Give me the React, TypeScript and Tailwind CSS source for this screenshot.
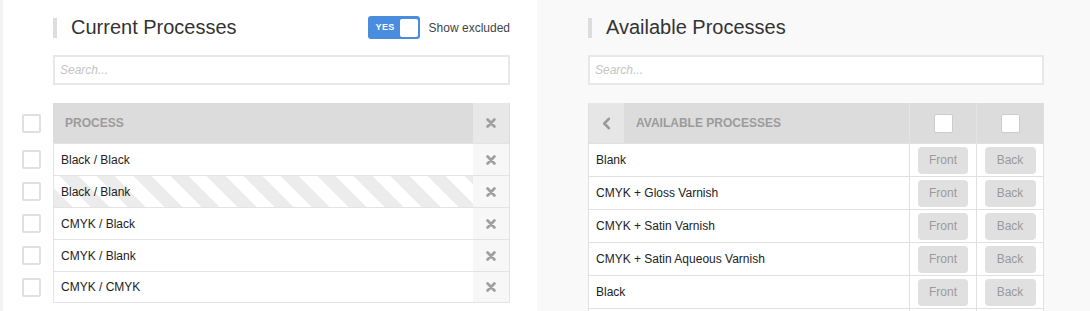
import React from "react";

const current = ["Black / Black", "Black / Blank", "CMYK / Black", "CMYK / Blank", "CMYK / CMYK"];
const available = [
  "Blank",
  "CMYK + Gloss Varnish",
  "CMYK + Satin Varnish",
  "CMYK + Satin Aqueous Varnish",
  "Black",
];

function Times() {
  return (
    <svg width="10" height="10" viewBox="0 0 10 10" className="text-[#a0a0a0]">
      <path d="M1.6 1.6 L8.4 8.4 M8.4 1.6 L1.6 8.4" stroke="currentColor" strokeWidth="2.8" strokeLinecap="round" />
    </svg>
  );
}

function Chevron() {
  return (
    <svg width="9" height="13" viewBox="0 0 9 13" className="text-[#9a9a9a]">
      <path d="M6.8 1.8 L2.3 6.5 L6.8 11.2" stroke="currentColor" strokeWidth="2.6" fill="none" strokeLinecap="round" strokeLinejoin="round" />
    </svg>
  );
}

function Box({ className = "" }: { className?: string }) {
  return <div className={"w-[19px] h-[19px] bg-white rounded-[2px] " + className} />;
}

function Title({ text }: { text: string }) {
  return (
    <div className="flex items-center">
      <div className="w-[4px] h-[20px] bg-[#dddddd]" />
      <div className="ml-[14px] text-[20px] leading-[23px] text-[#333333]">{text}</div>
    </div>
  );
}

function Search({ w }: { w: string }) {
  return (
    <div className={"mt-[16px] h-[30px] border-2 border-[#e8e8e8] bg-white flex items-center pl-[5px] " + w}>
      <span className="italic text-[12px] text-[#c4c4c4]">Search...</span>
    </div>
  );
}

export default function App() {
  return (
    <div className="flex w-[1090px] h-[311px] overflow-hidden font-['Liberation_Sans',Arial,sans-serif]">
      {/* Left panel */}
      <div className="w-[537px] shrink-0 bg-white border-l-[3px] border-[#f3f3f3] pl-[19px] pt-[16px]">
        <div className="ml-[31px] w-[457px]">
          <div className="flex items-center h-[23px]">
            <Title text="Current Processes" />
            <div className="ml-auto flex items-center">
              <div className="w-[52px] h-[23px] rounded-[3px] bg-[#4a8ddf] flex items-center pl-[8px] pr-[2px]">
                <span className="text-[9px] font-bold text-white tracking-[0.3px]">YES</span>
                <div className="ml-auto w-[18px] h-[18px] bg-white rounded-[2px]" />
              </div>
              <span className="ml-[9px] text-[12px] text-[#444444]">Show excluded</span>
            </div>
          </div>
          <Search w="w-[457px]" />
        </div>
        <div className="mt-[18px]">
          <div className="flex h-[40px]">
            <div className="w-[31px] flex items-center">
              <Box className="border-2 border-[#e0e0e0]" />
            </div>
            <div className="w-[457px] flex bg-[#dcdcdc] border-l border-r border-[#dcdcdc]">
              <div className="flex-1 flex items-center pl-[11px] text-[12px] font-bold text-[#9b9b9b]">PROCESS</div>
              <div className="w-[36px] bg-[#e8e8e8] flex items-center justify-center">
                <Times />
              </div>
            </div>
          </div>
          {current.map((name, i) => (
            <div key={name} className="flex h-[32px]">
              <div className="w-[31px] flex items-center">
                <Box className="border-2 border-[#e0e0e0]" />
              </div>
              <div
                className={
                  "w-[457px] flex border-t border-l border-r border-[#e3e3e3] " +
                  (i === current.length - 1 ? "border-b " : "") +
                  (i === 1
                    ? "bg-[repeating-linear-gradient(45deg,#ececec_0px,#ececec_13px,#ffffff_13px,#ffffff_26px)]"
                    : "bg-white")
                }
              >
                <div className="flex-1 flex items-center pl-[7px] text-[12px] text-[#222222]">{name}</div>
                <div className="w-[36px] bg-[#f7f7f7] flex items-center justify-center">
                  <Times />
                </div>
              </div>
            </div>
          ))}
        </div>
      </div>

      {/* Right panel */}
      <div className="flex-1 bg-[#f9f9f9] pl-[51px] pt-[16px]">
        <div className="flex items-center h-[23px]">
          <Title text="Available Processes" />
        </div>
        <Search w="w-[456px]" />
        <div className="mt-[18px] w-[456px] border-l border-r border-[#e0e0e0]">
          <div className="flex h-[40px] bg-[#dcdcdc]">
            <div className="w-[35px] bg-[#e6e6e6] flex items-center justify-center">
              <Chevron />
            </div>
            <div className="flex-1 flex items-center pl-[12px] text-[12px] font-bold text-[#9b9b9b]">
              AVAILABLE PROCESSES
            </div>
            <div className="w-[67px] border-l border-[#e4e4e4] flex items-center justify-center">
              <Box className="border border-[#cccccc]" />
            </div>
            <div className="w-[67px] border-l border-[#e4e4e4] flex items-center justify-center">
              <Box className="border border-[#cccccc]" />
            </div>
          </div>
          {available.map((name) => (
            <div key={name} className="flex h-[33px] bg-white border-t border-[#e0e0e0]">
              <div className="flex-1 flex items-center pl-[7px] text-[12px] text-[#222222]">{name}</div>
              <div className="w-[67px] border-l border-[#e0e0e0] flex items-center justify-center">
                <div className="w-[50px] h-[27px] rounded-[4px] bg-[#e0e0e0] flex items-center justify-center text-[12px] text-[#9a9a9a]">
                  Front
                </div>
              </div>
              <div className="w-[67px] border-l border-[#e0e0e0] flex items-center justify-center">
                <div className="w-[51px] h-[27px] rounded-[4px] bg-[#e0e0e0] flex items-center justify-center text-[12px] text-[#9a9a9a]">
                  Back
                </div>
              </div>
            </div>
          ))}
          <div className="flex h-[33px] bg-white border-t border-[#e0e0e0]">
            <div className="flex-1" />
            <div className="w-[67px] border-l border-[#e0e0e0]" />
            <div className="w-[67px] border-l border-[#e0e0e0]" />
          </div>
        </div>
      </div>
    </div>
  );
}
